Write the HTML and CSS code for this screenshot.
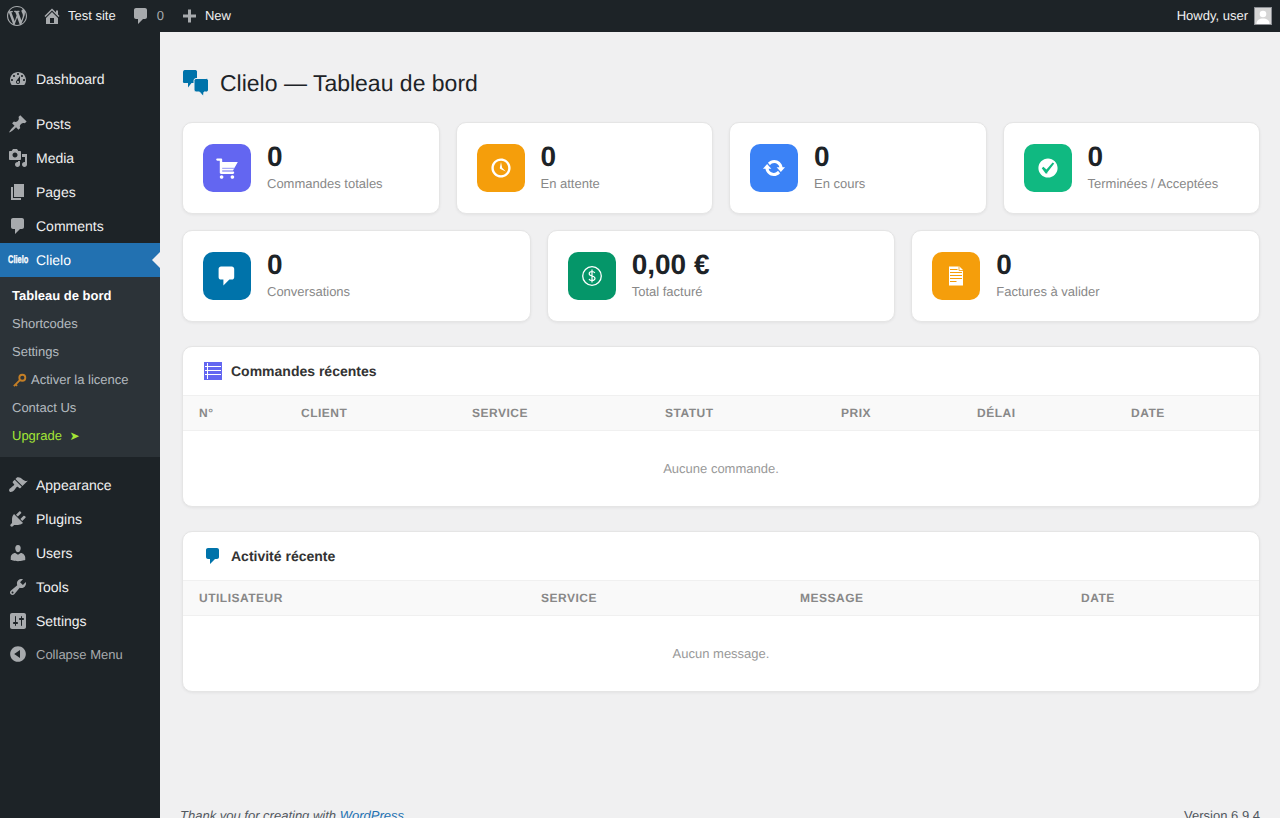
FILE: index.html
```html
<!DOCTYPE html>
<html lang="en">
<head>
<meta charset="utf-8">
<title>Clielo — Tableau de bord</title>
<link rel="stylesheet" href="styles.css">
</head>
<body>
<div class="page">
  <header class="adminbar">
    <svg class="ab-icon" viewBox="0 0 20 20"><path d="M20 10c0-5.51-4.49-10-10-10C4.48 0 0 4.49 0 10c0 5.52 4.48 10 10 10 5.51 0 10-4.48 10-10zM7.78 15.37L4.37 6.22c.55-.02 1.17-.08 1.17-.08.5-.06.44-1.13-.06-1.11 0 0-1.45.11-2.37.11-.18 0-.37 0-.58-.01C4.12 2.69 6.87 1.11 10 1.11c2.33 0 4.45.87 6.05 2.34-.68-.11-1.65.39-1.65 1.58 0 .74.45 1.36.9 2.1.35.61.55 1.36.55 2.46 0 1.49-1.4 5-1.4 5l-3.03-8.37c.54-.02.82-.17.82-.17.5-.05.44-1.25-.06-1.22 0 0-1.44.12-2.38.12-.87 0-2.33-.12-2.33-.12-.5-.03-.56 1.2-.06 1.22l.92.08 1.26 3.41zM17.41 10c.24-.64.74-1.87.43-4.25.7 1.29 1.05 2.71 1.05 4.25 0 3.29-1.73 6.24-4.4 7.78.97-2.59 1.94-5.2 2.92-7.78zM6.1 18.09C3.12 16.65 1.11 13.53 1.11 10c0-1.3.23-2.48.72-3.59C3.25 10.3 4.67 14.2 6.1 18.09zm4.03-6.63l2.58 6.98c-.86.29-1.76.45-2.71.45-.79 0-1.57-.11-2.29-.33.81-2.38 1.62-4.74 2.42-7.1z"/></svg>
    <a class="ab-item"><svg class="ab-icon" viewBox="0 0 20 20"><path d="M16 8.5l1.53 1.53-1.06 1.06L10 4.62l-6.47 6.47-1.06-1.06L10 2.5l4 4v-2h2v4zm-6-2.46l6 5.99V18H4v-5.97zM12 17v-5H8v5h4z"/></svg>Test site</a>
    <a class="ab-item ab-muted"><svg class="ab-icon" viewBox="0 0 20 20"><path d="M5 2h9c1.100 0 2 .900 2 2v7c0 1.100-.900 2-2 2h-2l-5 5v-5H5c-1.100 0-2-.900-2-2V4c0-1.100.900-2 2-2z"/></svg>0</a>
    <a class="ab-item"><svg class="ab-icon" viewBox="0 0 20 20"><path d="M9 3.500h3v5h5v3h-5v5H9v-5H4v-3h5z"/></svg>New</a>
    <a class="ab-item ab-right">Howdy, user<span class="avatar"><svg viewBox="0 0 16 16"><rect width="16" height="16" fill="#d5d5d5"/><circle cx="8" cy="6" r="3.300" fill="#fff"/><path d="M1.500 16c0-4 3-5.500 6.500-5.500s6.500 1.500 6.500 5.500z" fill="#fff"/></svg></span></a>
  </header>
  <div class="shell">
    <nav class="sidebar">
      <ul class="menu">
        <li class="mi"><svg viewBox="0 0 20 20"><path d="M3.760 16h12.480c1.100-1.370 1.760-3.110 1.760-5 0-4.420-3.580-8-8-8s-8 3.580-8 8c0 1.890.660 3.630 1.760 5zM10 4c.550 0 1 .450 1 1s-.450 1-1 1-1-.450-1-1 .450-1 1-1zM6 6c.550 0 1 .450 1 1s-.450 1-1 1-1-.450-1-1 .450-1 1-1zm8 0c.550 0 1 .450 1 1s-.450 1-1 1-1-.450-1-1 .450-1 1-1zm-5.370 5.550L12 7v6c0 1.100-.900 2-2 2s-2-.900-2-2c0-.570.240-1.080.630-1.450zM4 10c.550 0 1 .450 1 1s-.450 1-1 1-1-.450-1-1 .450-1 1-1zm12 0c.550 0 1 .450 1 1s-.450 1-1 1-1-.450-1-1 .450-1 1-1zm-5 3c0-.550-.450-1-1-1s-1 .450-1 1 .450 1 1 1 1-.450 1-1z" fill-rule="evenodd"/></svg>Dashboard</li>
        <li class="sep"></li>
        <li class="mi"><svg viewBox="0 0 20 20"><path d="M10.440 3.020l1.820-1.820 6.360 6.350-1.830 1.820c-1.050-.680-2.480-.570-3.410.360l-.750.750c-.920.930-1.040 2.350-.350 3.410l-1.830 1.820-2.410-2.410-2.800 2.790c-.420.420-3.380 2.710-3.800 2.290s1.860-3.390 2.280-3.810l2.790-2.790L4.100 9.360l1.830-1.820c1.050.690 2.480.570 3.400-.360l.750-.750c.930-.920 1.050-2.350.360-3.410z"/></svg>Posts</li>
        <li class="mi"><svg viewBox="0 0 20 20"><path d="M13 11V4c0-.550-.450-1-1-1h-1.670L9 1H5L3.670 3H2c-.550 0-1 .450-1 1v7c0 .550.450 1 1 1h10c.550 0 1-.450 1-1zM7 4.500c1.380 0 2.500 1.120 2.500 2.500S8.380 9.500 7 9.500 4.500 8.380 4.500 7 5.620 4.500 7 4.500zM14 6h5v10.500c0 1.380-1.120 2.500-2.500 2.500S14 17.880 14 16.500s1.120-2.500 2.500-2.500c.170 0 .340.020.500.050V9h-3V6zm-4 8.050V13h2v3.500c0 1.380-1.120 2.500-2.500 2.500S7 17.880 7 16.500 8.120 14 9.500 14c.170 0 .340.020.500.050z"/></svg>Media</li>
        <li class="mi"><svg viewBox="0 0 20 20"><path d="M6 15V2h10v13H6zm-1 1h8v2H3V5h2v11z"/></svg>Pages</li>
        <li class="mi"><svg viewBox="0 0 20 20"><path d="M5 2h9c1.100 0 2 .900 2 2v7c0 1.100-.900 2-2 2h-2l-5 5v-5H5c-1.100 0-2-.900-2-2V4c0-1.100.900-2 2-2z"/></svg>Comments</li>
        <li class="mi mi-current"><span class="logo-box"><span class="logo-word">Clielo</span></span>Clielo</li>
        <li>
          <ul class="submenu">
            <li class="sub-current">Tableau de bord</li>
            <li>Shortcodes</li>
            <li>Settings</li>
            <li class="sub-key"><svg class="key" viewBox="0 0 16 16"><circle cx="11" cy="5" r="3.200" fill="none" stroke="#c47f26" stroke-width="2"/><path d="M8.700 7.300L2 14M3.800 12.200l1.600 1.600" fill="none" stroke="#c47f26" stroke-width="2"/></svg>Activer la licence</li>
            <li>Contact Us</li>
            <li class="sub-upgrade">Upgrade <span class="arrow">➤</span></li>
          </ul>
        </li>
        <li class="sep"></li>
        <li class="mi"><svg viewBox="0 0 20 20"><path d="M14.480 11.060L7.410 3.990l1.500-1.500c.500-.560 2.300-.470 3.510.320 1.210.800 1.430 1.280 2.910 2.100 1.180.640 2.450 1.260 4.450.850zm-.710.710L6.700 4.700 4.930 6.470c-.390.390-.390 1.020 0 1.410l1.060 1.060c.390.390.390 1.030 0 1.420-.600.600-1.430 1.110-2.210 1.690-.350.260-.700.530-1.010.840C1.430 13.230.400 15.340 1.550 16.480c1.150 1.150 3.250.120 4.600-1.240.310-.310.590-.660.840-1.010.580-.780 1.090-1.610 1.690-2.210.390-.390 1.020-.390 1.410 0l1.060 1.060c.390.390 1.020.390 1.410 0z"/></svg>Appearance</li>
        <li class="mi"><svg viewBox="0 0 20 20"><path d="M13.110 4.360L9.870 7.600 8 5.730l3.240-3.240c.350-.340 1.050-.200 1.560.320.520.510.660 1.210.310 1.550zm-8 1.770l.910-1.120 9.010 9.010-1.190.840c-.710.710-2.630 1.160-3.820 1.160H6.140L4.900 17.260c-.590.590-1.540.590-2.120 0-.590-.580-.590-1.530 0-2.120l1.240-1.240v-3.880c0-1.130.400-3.190 1.090-3.890zm7.260 3.970l3.240-3.240c.340-.350 1.040-.210 1.550.310.520.510.660 1.210.310 1.550l-3.240 3.250z"/></svg>Plugins</li>
        <li class="mi"><svg viewBox="0 0 20 20"><path d="M10 9.250c-2.270 0-2.730-3.440-2.730-3.440C7 4.020 7.820 2 9.970 2c2.160 0 2.980 2.020 2.710 3.810 0 0-.410 3.440-2.680 3.440zm0 2.570L12.720 10c2.390 0 4.520 2.330 4.520 4.530v2.490s-3.650 1.130-7.240 1.130c-3.650 0-7.240-1.130-7.240-1.130v-2.490c0-2.250 1.940-4.480 4.470-4.480z"/></svg>Users</li>
        <li class="mi"><svg viewBox="0 0 20 20"><path d="M16.680 9.770c-1.340 1.340-3.300 1.670-4.950.990l-5.410 6.520c-.990.990-2.590.990-3.580 0s-.990-2.590 0-3.570l6.520-5.420c-.680-1.650-.350-3.610.990-4.950 1.280-1.280 3.120-1.620 4.720-1.060l-2.890 2.890 2.820 2.820 2.860-2.870c.530 1.580.180 3.390-1.080 4.650zM3.810 16.210c.400.390 1.040.390 1.430 0 .400-.400.400-1.040 0-1.430-.390-.400-1.030-.400-1.430 0-.390.390-.390 1.030 0 1.430z"/></svg>Tools</li>
        <li class="mi"><svg viewBox="0 0 20 20"><path d="M18 16V4c0-1.100-.900-2-2-2H4c-1.100 0-2 .900-2 2v12c0 1.100.900 2 2 2h12c1.100 0 2-.900 2-2zM8 11h1c.550 0 1 .450 1 1s-.450 1-1 1H8v1.500c0 .280-.220.500-.500.500s-.500-.220-.500-.500V13H6c-.550 0-1-.450-1-1s.450-1 1-1h1V5.500c0-.280.220-.500.500-.500s.500.220.500.500V11zm5-2h-1c-.550 0-1-.450-1-1s.450-1 1-1h1V5.500c0-.280.220-.500.500-.500s.500.220.500.500V7h1c.550 0 1 .450 1 1s-.450 1-1 1h-1v5.500c0 .280-.220.500-.500.500s-.500-.220-.500-.500V9z"/></svg>Settings</li>
        <li class="mi mi-collapse"><svg viewBox="0 0 20 20"><path d="M10 2.160c4.330 0 7.840 3.510 7.840 7.840s-3.510 7.840-7.840 7.840S2.160 14.330 2.160 10 5.710 2.160 10 2.160zm2 11.720V6.120L6.180 9.970z"/></svg>Collapse Menu</li>
      </ul>
    </nav>
    <main class="main">
      <div class="wrap">
        <h1 class="title"><svg class="title-icon" viewBox="0 0 26 27"><path d="M2.500 0h10A2 2 0 0 1 15 2.500V11a2 2 0 0 1-2 2H9.500L6 17.500V13H2.500A1.500 1.500 0 0 1 1 11V2A2 2 0 0 1 2.500 0z"/><path d="M14 8.500h10.500A2 2 0 0 1 26.500 10.500V20a2 2 0 0 1-2 2H22l-.5 4.500L17.500 22H14a2 2 0 0 1-2-2V10.500A2 2 0 0 1 14 8.500z" stroke="#f0f0f1" stroke-width="1"/></svg>Clielo — Tableau de bord</h1>

        <section class="stats stats-4">
          <article class="card">
            <span class="badge bg-indigo"><svg class="bi" viewBox="0 0 20 20"><path d="M6 13h9c.550 0 1 .450 1 1s-.450 1-1 1H5c-.550 0-1-.450-1-1V4H2c-.550 0-1-.450-1-1s.450-1 1-1h3c.550 0 1 .450 1 1v2h13l-4 7H6v1zm-.500 3c.830 0 1.500.670 1.500 1.500S6.330 19 5.500 19 4 18.330 4 17.500 4.670 16 5.500 16zm9 0c.830 0 1.500.670 1.500 1.500s-.670 1.500-1.500 1.500-1.500-.670-1.500-1.500.670-1.500 1.500-1.500z"/><path class="cart-stripe" d="M6 9.800h10.300l-.6 1.100H6z"/></svg></span>
            <div><div class="value">0</div><div class="label">Commandes totales</div></div>
          </article>
          <article class="card">
            <span class="badge bg-amber"><svg class="bi" viewBox="0 0 20 20"><path d="M10 2c4.420 0 8 3.580 8 8s-3.580 8-8 8-8-3.580-8-8 3.580-8 8-8zm0 14c3.310 0 6-2.690 6-6s-2.690-6-6-6-6 2.690-6 6 2.690 6 6 6zm-.710-5.290c.070.050.140.100.230.150l-.020.020L14 13l-3.030-3.190L10 5l-.970 4.810h.010c0 .020-.010.050-.020.090S9 9.970 9 10c0 .280.100.520.290.710z"/></svg></span>
            <div><div class="value">0</div><div class="label">En attente</div></div>
          </article>
          <article class="card">
            <span class="badge bg-blue"><svg class="bi" viewBox="0 0 20 20"><path d="M10.200 3.280c3.530 0 6.430 2.610 6.920 6h2.080l-3.500 4-3.500-4h2.320c-.450-1.970-2.210-3.450-4.320-3.450-1.450 0-2.730.710-3.540 1.780L4.950 5.660C6.230 4.200 8.110 3.280 10.200 3.280zm-.400 13.440c-3.520 0-6.430-2.610-6.920-6H.8l3.500-4c1.170 1.330 2.330 2.670 3.500 4H5.480c.450 1.970 2.210 3.450 4.320 3.450 1.450 0 2.730-.710 3.540-1.780l1.710 1.950c-1.280 1.460-3.150 2.380-5.250 2.380z"/></svg></span>
            <div><div class="value">0</div><div class="label">En cours</div></div>
          </article>
          <article class="card">
            <span class="badge bg-green"><svg class="bi" viewBox="0 0 20 20"><path fill-rule="evenodd" d="M10 2c-4.420 0-8 3.580-8 8s3.580 8 8 8 8-3.580 8-8-3.580-8-8-8zm-.615 12.660h-1.340l-3.240-4.540 1.340-1.250 2.570 2.400 5.140-5.930 1.340.940-5.810 7.380z"/></svg></span>
            <div><div class="value">0</div><div class="label">Terminées / Acceptées</div></div>
          </article>
        </section>

        <section class="stats stats-3">
          <article class="card">
            <span class="badge bg-ocean"><svg class="bi" viewBox="0 0 20 20"><path d="M5 2h9c1.100 0 2 .900 2 2v7c0 1.100-.900 2-2 2h-2l-5 5v-5H5c-1.100 0-2-.900-2-2V4c0-1.100.900-2 2-2z"/></svg></span>
            <div><div class="value">0</div><div class="label">Conversations</div></div>
          </article>
          <article class="card">
            <span class="badge bg-emerald"><svg class="bi" viewBox="0 0 24 24"><circle cx="12" cy="12" r="9.300" fill="none" stroke="#fff" stroke-width="1.300"/><path d="M14.800 9c-.5-1-1.500-1.500-2.800-1.500-1.600 0-2.800.9-2.800 2.200 0 3 5.800 1.600 5.800 4.600 0 1.300-1.300 2.200-3 2.200-1.400 0-2.500-.6-3-1.600M12 5.500v13" fill="none" stroke="#fff" stroke-width="1.200"/></svg></span>
            <div><div class="value">0,00 €</div><div class="label">Total facturé</div></div>
          </article>
          <article class="card">
            <span class="badge bg-amber"><svg class="bi" viewBox="0 0 24 24"><path d="M5 2.500h10.500L19 6v15.500H5z" fill="#fff"/><path d="M15 2.500V6.500H19" fill="none" stroke="#f59e0b" stroke-width=".8"/><path d="M6 5.500h7.500M6 8.500h12M6 11.500h12M6 14.500h12M6 17.500h6.500" stroke="#f59e0b" stroke-width="1" fill="none"/></svg></span>
            <div><div class="value">0</div><div class="label">Factures à valider</div></div>
          </article>
        </section>

        <section class="panel">
          <h2 class="panel-head"><svg class="panel-icon" viewBox="0 0 18 18"><rect width="18" height="18" fill="#6366f1"/><path d="M1 4.500h16M1 8.500h16M1 12.500h16M3.500 1v16" stroke="#fff" stroke-width="1"/></svg>Commandes récentes</h2>
          <table class="tbl orders">
            <thead><tr><th>N°</th><th>Client</th><th>Service</th><th>Statut</th><th>Prix</th><th>Délai</th><th>Date</th></tr></thead>
            <tbody><tr><td colspan="7">Aucune commande.</td></tr></tbody>
          </table>
        </section>

        <section class="panel">
          <h2 class="panel-head"><svg class="panel-icon panel-icon-chat" viewBox="0 0 20 20"><path fill="#0073aa" d="M5 2h9c1.100 0 2 .900 2 2v7c0 1.100-.900 2-2 2h-2l-5 5v-5H5c-1.100 0-2-.900-2-2V4c0-1.100.900-2 2-2z"/></svg>Activité récente</h2>
          <table class="tbl activity">
            <thead><tr><th>Utilisateur</th><th>Service</th><th>Message</th><th>Date</th></tr></thead>
            <tbody><tr><td colspan="4">Aucun message.</td></tr></tbody>
          </table>
        </section>
      </div>
      <footer class="footer">
        <span class="thanks">Thank you for creating with <a>WordPress</a>.</span>
        <span>Version 6.9.4</span>
      </footer>
    </main>
  </div>
</div>
</body>
</html>
```
FILE: styles.css
```css
* { box-sizing: border-box; }
html, body { margin: 0; padding: 0; height: 100%; }
body {
  font-family: "Liberation Sans", Arial, sans-serif;
  font-size: 13px;
  color: #3c434a;
  background: #f0f0f1;
  overflow: hidden;
  text-rendering: geometricPrecision;
}
ul { list-style: none; margin: 0; padding: 0; }
svg { display: block; flex: none; }

.page { height: 818px; display: flex; flex-direction: column; overflow: hidden; }

/* Admin bar */
.adminbar {
  height: 32px;
  flex: none;
  background: #1d2327;
  color: #f0f0f1;
  display: flex;
  align-items: center;
  gap: 15px;
  padding: 0 8px 0 7px;
  line-height: 32px;
}
.ab-icon { width: 20px; height: 20px; fill: #a7aaad; }
.ab-item { display: flex; align-items: center; gap: 6px; }
.ab-muted { color: #a7aaad; }
.ab-right { margin-left: auto; }
.avatar { width: 18px; height: 18px; border: 1px solid #8c8f94; background: #ddd; display: block; }
.avatar svg { width: 16px; height: 16px; }

/* Layout */
.shell { flex: 1; display: flex; min-height: 0; }
.sidebar { width: 160px; flex: none; background: #1d2327; padding-top: 30px; }

/* Menu */
.mi {
  position: relative;
  height: 34px;
  display: flex;
  align-items: center;
  gap: 8px;
  padding-left: 8px;
  font-size: 14px;
  color: #f0f0f1;
}
.mi svg { width: 20px; height: 20px; fill: #a7aaad; }
.sep { height: 11px; }
.mi-current { background: #2271b1; color: #fff; }
.mi-current::after {
  content: "";
  position: absolute;
  right: 0;
  top: 9px;
  border: 8px solid transparent;
  border-right-color: #f0f0f1;
  border-left-width: 0;
}
.logo-box { width: 20px; height: 20px; flex: none; display: block; }
.logo-word {
  display: block;
  color: #fff;
  font-size: 11px;
  line-height: 20px;
  font-weight: 700;
  white-space: nowrap;
  transform: scaleX(.68);
  transform-origin: left center;
  -webkit-text-stroke: .3px #fff;
}
.submenu { background: #2c3338; padding: 5px 0 7px; }
.submenu li {
  height: 28px;
  line-height: 28px;
  padding-left: 12px;
  color: rgba(240, 246, 252, .7);
  display: flex;
  align-items: center;
  white-space: pre;
}
.submenu .sub-current { color: #fff; font-weight: 700; }
.submenu .sub-upgrade { color: #a3e635; }
.arrow { font-family: "DejaVu Sans", sans-serif; font-size: 12px; margin-left: 4px; }
.key { width: 15px; height: 15px; margin-right: 4px; }
.mi-collapse { color: #a7aaad; font-size: 13px; height: 32px; }

/* Main */
.main { flex: 1; min-width: 0; padding: 0 20px; display: flex; flex-direction: column; }
.wrap { padding: 0 0 0 2px; }
.title {
  margin: 0;
  padding-top: 12px;
  height: 90px;
  display: flex;
  align-items: center;
  gap: 12px;
  font-size: 23px;
  font-weight: 400;
  line-height: 30px;
  color: #1d2327;
}
.title-icon { width: 26px; height: 27px; fill: #0073aa; }

.stats { display: grid; gap: 16px; margin-bottom: 16px; }
.stats-4 { grid-template-columns: repeat(4, 1fr); }
.stats-3 { grid-template-columns: repeat(3, 1fr); margin-bottom: 24px; }
.card {
  height: 92px;
  background: #fff;
  border: 1px solid #e5e5e5;
  border-radius: 10px;
  box-shadow: 0 1px 3px rgba(0, 0, 0, .06);
  padding: 0 20px;
  display: flex;
  align-items: center;
  gap: 16px;
}
.badge {
  width: 48px;
  height: 48px;
  flex: none;
  border-radius: 10px;
  display: flex;
  align-items: center;
  justify-content: center;
}
.bi { width: 24px; height: 24px; fill: #fff; }
.cart-stripe { fill: #6366f1; fill-opacity: .55; }
.bg-indigo { background: #6366f1; }
.bg-amber { background: #f59e0b; }
.bg-blue { background: #3b82f6; }
.bg-green { background: #10b981; }
.bg-ocean { background: #0073aa; }
.bg-emerald { background: #059669; }
.value { font-size: 28px; font-weight: 700; line-height: 28px; color: #1d2327; }
.label { font-size: 13px; line-height: 18px; margin-top: 4px; color: #888; }

/* Panels */
.panel {
  background: #fff;
  border: 1px solid #e5e5e5;
  border-radius: 10px;
  box-shadow: 0 1px 3px rgba(0, 0, 0, .06);
  margin-bottom: 24px;
  overflow: hidden;
}
.panel-head {
  margin: 0;
  height: 49px;
  padding-left: 21px;
  display: flex;
  align-items: center;
  gap: 9px;
  font-size: 14px;
  font-weight: 700;
  color: #333;
  border-bottom: 1px solid #f0f0f0;
}
.panel-icon { width: 18px; height: 18px; }
.panel-icon-chat { width: 20px; height: 20px; margin: 0 -1px 0 -1px; }
.tbl { width: 100%; border-collapse: collapse; table-layout: fixed; }
.tbl th {
  height: 34px;
  padding: 0 16px;
  text-align: left;
  font-size: 12px;
  font-weight: 700;
  letter-spacing: .5px;
  text-transform: uppercase;
  color: #888;
  background: #f9f9f9;
  border-bottom: 1px solid #f0f0f0;
}
.tbl td {
  height: 76px;
  padding: 0 16px;
  text-align: center;
  font-size: 13px;
  color: #999;
}
.orders th:nth-child(1) { width: 102px; }
.orders th:nth-child(2) { width: 171px; }
.orders th:nth-child(3) { width: 193px; }
.orders th:nth-child(4) { width: 176px; }
.orders th:nth-child(5) { width: 136px; }
.orders th:nth-child(6) { width: 154px; }
.activity th:nth-child(1) { width: 342px; }
.activity th:nth-child(2) { width: 259px; }
.activity th:nth-child(3) { width: 281px; }

/* Footer */
.footer {
  display: flex;
  justify-content: space-between;
  margin-top: 92px;
  line-height: 16px;
  color: #50575e;
}
.thanks { font-style: italic; }
.thanks a { color: #2271b1; text-decoration: underline; }
```
